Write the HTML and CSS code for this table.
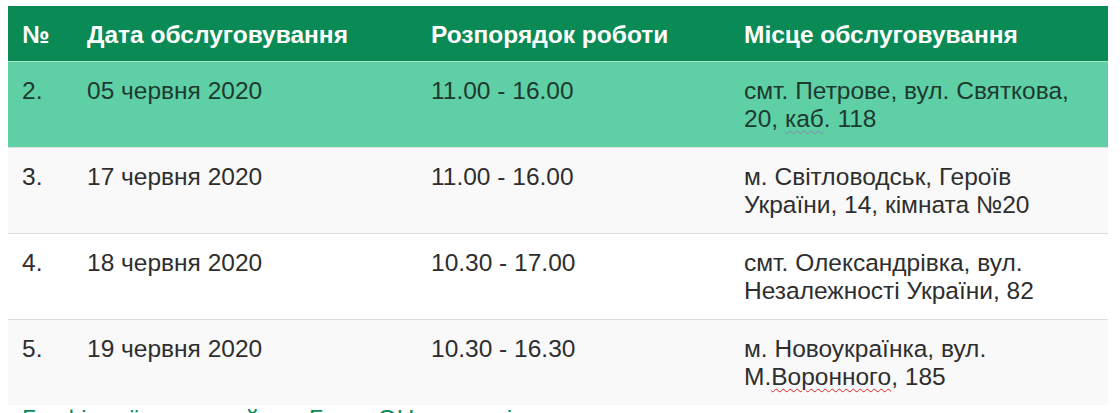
FILE: index.html
```html
<!DOCTYPE html>
<html lang="uk">
<head>
<meta charset="utf-8">
<title>Графік обслуговування</title>
<link rel="stylesheet" href="styles.css">
</head>
<body>
<div class="page">
  <table class="schedule">
    <colgroup>
      <col class="c-num">
      <col class="c-date">
      <col class="c-time">
      <col class="c-place">
    </colgroup>
    <thead>
      <tr>
        <th>№</th>
        <th>Дата обслуговування</th>
        <th>Розпорядок роботи</th>
        <th>Місце обслуговування</th>
      </tr>
    </thead>
    <tbody>
      <tr class="active">
        <td>2.</td>
        <td>05 червня 2020</td>
        <td>11.00 - 16.00</td>
        <td>смт. Петрове, вул. Святкова,<br>20, <span class="grammar">каб</span>. 118</td>
      </tr>
      <tr class="odd">
        <td>3.</td>
        <td>17 червня 2020</td>
        <td>11.00 - 16.00</td>
        <td>м. Світловодськ, Героїв<br>України, 14, кімната №20</td>
      </tr>
      <tr>
        <td>4.</td>
        <td>18 червня 2020</td>
        <td>10.30 - 17.00</td>
        <td>смт. Олександрівка, вул.<br>Незалежності України, 82</td>
      </tr>
      <tr class="odd">
        <td>5.</td>
        <td>19 червня 2020</td>
        <td>10.30 - 16.30</td>
        <td>м. Новоукраїнка, вул.<br>М.<span class="spell">Воронного</span>, 185</td>
      </tr>
    </tbody>
  </table>
  <p class="note">Графік виїзного прийому Бюро ОН у червні</p>
</div>
</body>
</html>
```

FILE: styles.css
```css
html, body {
  margin: 0;
  padding: 0;
  background: #ffffff;
}

.page {
  padding: 6px 12px 0 8px;
  font-family: "Liberation Sans", Arial, sans-serif;
  font-size: 24.5px;
  line-height: 28px;
  color: #2e2e2e;
}

.schedule {
  width: 1100px;
  border-collapse: collapse;
  table-layout: fixed;
}

.c-num { width: 65px; }
.c-date { width: 344px; }
.c-time { width: 313px; }
.c-place { width: 378px; }

.schedule th {
  background: #0a8a55;
  color: #ffffff;
  font-weight: bold;
  text-align: left;
  padding: 15px 14px 12px;
  white-space: nowrap;
}

.schedule td {
  padding: 15px 14px 14px;
  border-top: 1px solid #dddddd;
  vertical-align: top;
  text-align: left;
  white-space: nowrap;
}

.schedule tr.odd td {
  background: #f9f9f9;
}

.schedule tr.active td {
  background: #5fcfa5;
  border-top-color: #a6e8cd;
  color: #1d3a2e;
}

.grammar {
  text-decoration: underline wavy #8a7fa8;
  text-decoration-thickness: 1px;
  text-underline-offset: 3px;
}

.spell {
  text-decoration: underline wavy #d22;
  text-decoration-thickness: 1px;
  text-underline-offset: 3px;
}

.note {
  margin: 0;
  padding-left: 14px;
  color: #0a8a55;
  white-space: nowrap;
}
```
